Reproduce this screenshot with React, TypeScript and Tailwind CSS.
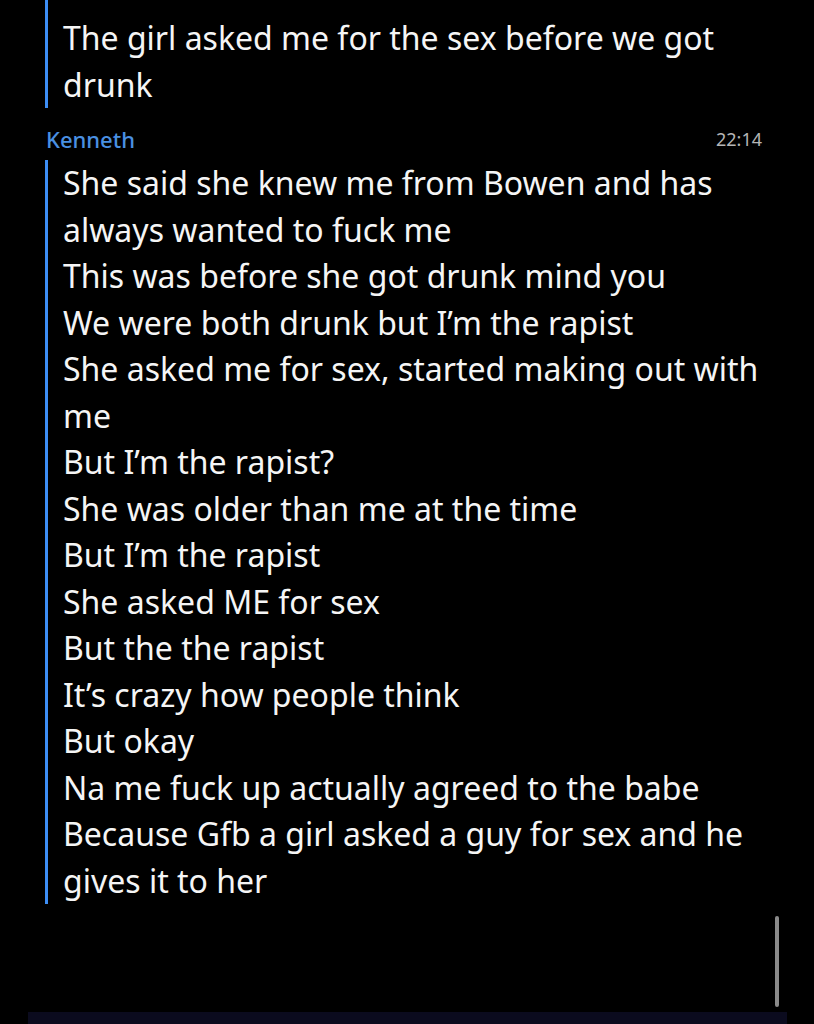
const firstMessage = ['The girl asked me for the sex before we got drunk']

const kennethMessages = [
  'She said she knew me from Bowen and has always wanted to fuck me',
  'This was before she got drunk mind you',
  'We were both drunk but I’m the rapist',
  'She asked me for sex, started making out with me',
  'But I’m the rapist?',
  'She was older than me at the time',
  'But I’m the rapist',
  'She asked ME for sex',
  'But the the rapist',
  'It’s crazy how people think',
  'But okay',
  'Na me fuck up actually agreed to the babe',
  'Because Gfb a girl asked a guy for sex and he gives it to her',
]

function MessageBlock({ lines, className = '' }: { lines: string[]; className?: string }) {
  return (
    <div className={`ml-[45px] mr-[40px] border-l-[3px] border-[#3d8ef5] pl-[15px] ${className}`}>
      {lines.map((line, i) => (
        <p key={i} className="text-[32px] leading-[46.5px] text-[#f5f5f5]">
          {line}
        </p>
      ))}
    </div>
  )
}

export default function App() {
  return (
    <div
      className="relative w-[814px] h-[1024px] bg-black overflow-hidden"
      style={{ fontFamily: '"Noto Sans", sans-serif' }}
    >
      <MessageBlock lines={firstMessage} className="pt-[15px]" />

      <div className="ml-[46px] mr-[52px] mt-[19px] flex items-center justify-between h-[24px]">
        <span className="text-[22px] font-medium text-[#4a90e2]">Kenneth</span>
        <span className="text-[18px] text-[#b5b5b5]">22:14</span>
      </div>

      <MessageBlock lines={kennethMessages} className="mt-[9px]" />

      {/* scroll indicator */}
      <div className="absolute left-[775px] top-[916px] w-[4px] h-[91px] rounded-full bg-[#8a8a8a]" />

      {/* bottom strip */}
      <div className="absolute left-[28px] top-[1012px] w-[759px] h-[12px] bg-[#0b0b1e]" />
    </div>
  )
}
